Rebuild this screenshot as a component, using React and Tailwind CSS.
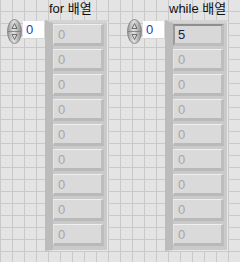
import React from 'react';

const font = { fontFamily: '"Liberation Sans", "Noto Sans CJK KR", sans-serif' };

const Spinner = () => (
  <svg width="15" height="25" viewBox="0 0 15 25">
    <defs>
      <linearGradient id="spg" x1="0" y1="0" x2="1" y2="0">
        <stop offset="0" stopColor="#9a9a9a" />
        <stop offset="0.45" stopColor="#e2e2e2" />
        <stop offset="1" stopColor="#8c8c8c" />
      </linearGradient>
    </defs>
    <ellipse cx="7.5" cy="12.5" rx="7" ry="12" fill="url(#spg)" stroke="#7c7c7c" strokeWidth="0.8" />
    <line x1="1" y1="12.5" x2="14" y2="12.5" stroke="#777" strokeWidth="0.8" />
    <path d="M7.5 4.5 L10 9.5 L5 9.5 Z" fill="none" stroke="#555" strokeWidth="0.8" />
    <path d="M7.5 20.5 L10 15.5 L5 15.5 Z" fill="none" stroke="#555" strokeWidth="0.8" />
  </svg>
);

const Numeric = () => (
  <div className="flex items-start">
    <div className="mt-[19px]">
      <Spinner />
    </div>
    <div className="mt-[21px] ml-px w-[22px] h-[18px] bg-white border-r border-b border-[#d8d8d8] text-[13px] leading-[18px] pl-[3px] text-[#1a3fbf]">
      0
    </div>
  </div>
);

const Element = ({ value, active }) => (
  <div
    className={
      active
        ? 'h-[22px] bg-[#d8d8d8] border-t-2 border-l-2 border-t-[#8e8e8e] border-l-[#9a9a9a] border-b-[3px] border-r-[3px] border-b-[#bdbdbd] border-r-[#bdbdbd] pl-[3px] text-[13px] leading-[17px]'
        : 'h-[22px] bg-[#dadada] border-t border-l border-t-[#efefef] border-l-[#e6e6e6] border-b-[3px] border-r-[3px] border-b-[#b9b9b9] border-r-[#bdbdbd] pl-[4px] text-[13px] leading-[19px]'
    }
  >
    <span className={active ? 'text-[#1c1c44]' : 'text-[#a7a7a7]'}>{value}</span>
  </div>
);

const ArrayBox = ({ label, values }) => (
  <div className="flex flex-col w-[63px]">
    <div className="h-[20px] pt-[2px] pl-[4px] whitespace-nowrap text-[13px] leading-[14px] font-normal text-[#111]">{label}</div>
    <div className="flex flex-col gap-[3px] bg-[#cacaca] border-l-[8px] border-l-[#bcbcbc] border-t-[3px] border-t-[#d4d4d4] border-r border-r-[#e8e8e8] border-b border-b-[#e8e8e8] pt-[1px] pb-[4px] pr-[3px]">
      {values.map((v, i) => (
        <Element key={i} value={v} active={v !== '0'} />
      ))}
    </div>
  </div>
);

export default function App() {
  return (
    <div
      className="w-[240px] h-[262px] overflow-hidden bg-[#e4e4e4] bg-[linear-gradient(to_right,#c9c9c9_1px,transparent_1px),linear-gradient(to_bottom,#c9c9c9_1px,transparent_1px)] bg-size-[12px_12px] bg-position-[0px_11px] flex items-start pl-[7px]"
      style={font}
    >
      <Numeric />
      <ArrayBox label="for 배열" values={['0', '0', '0', '0', '0', '0', '0', '0', '0']} />
      <div className="w-[19px]" />
      <Numeric />
      <ArrayBox label="while 배열" values={['5', '0', '0', '0', '0', '0', '0', '0', '0']} />
    </div>
  );
}
